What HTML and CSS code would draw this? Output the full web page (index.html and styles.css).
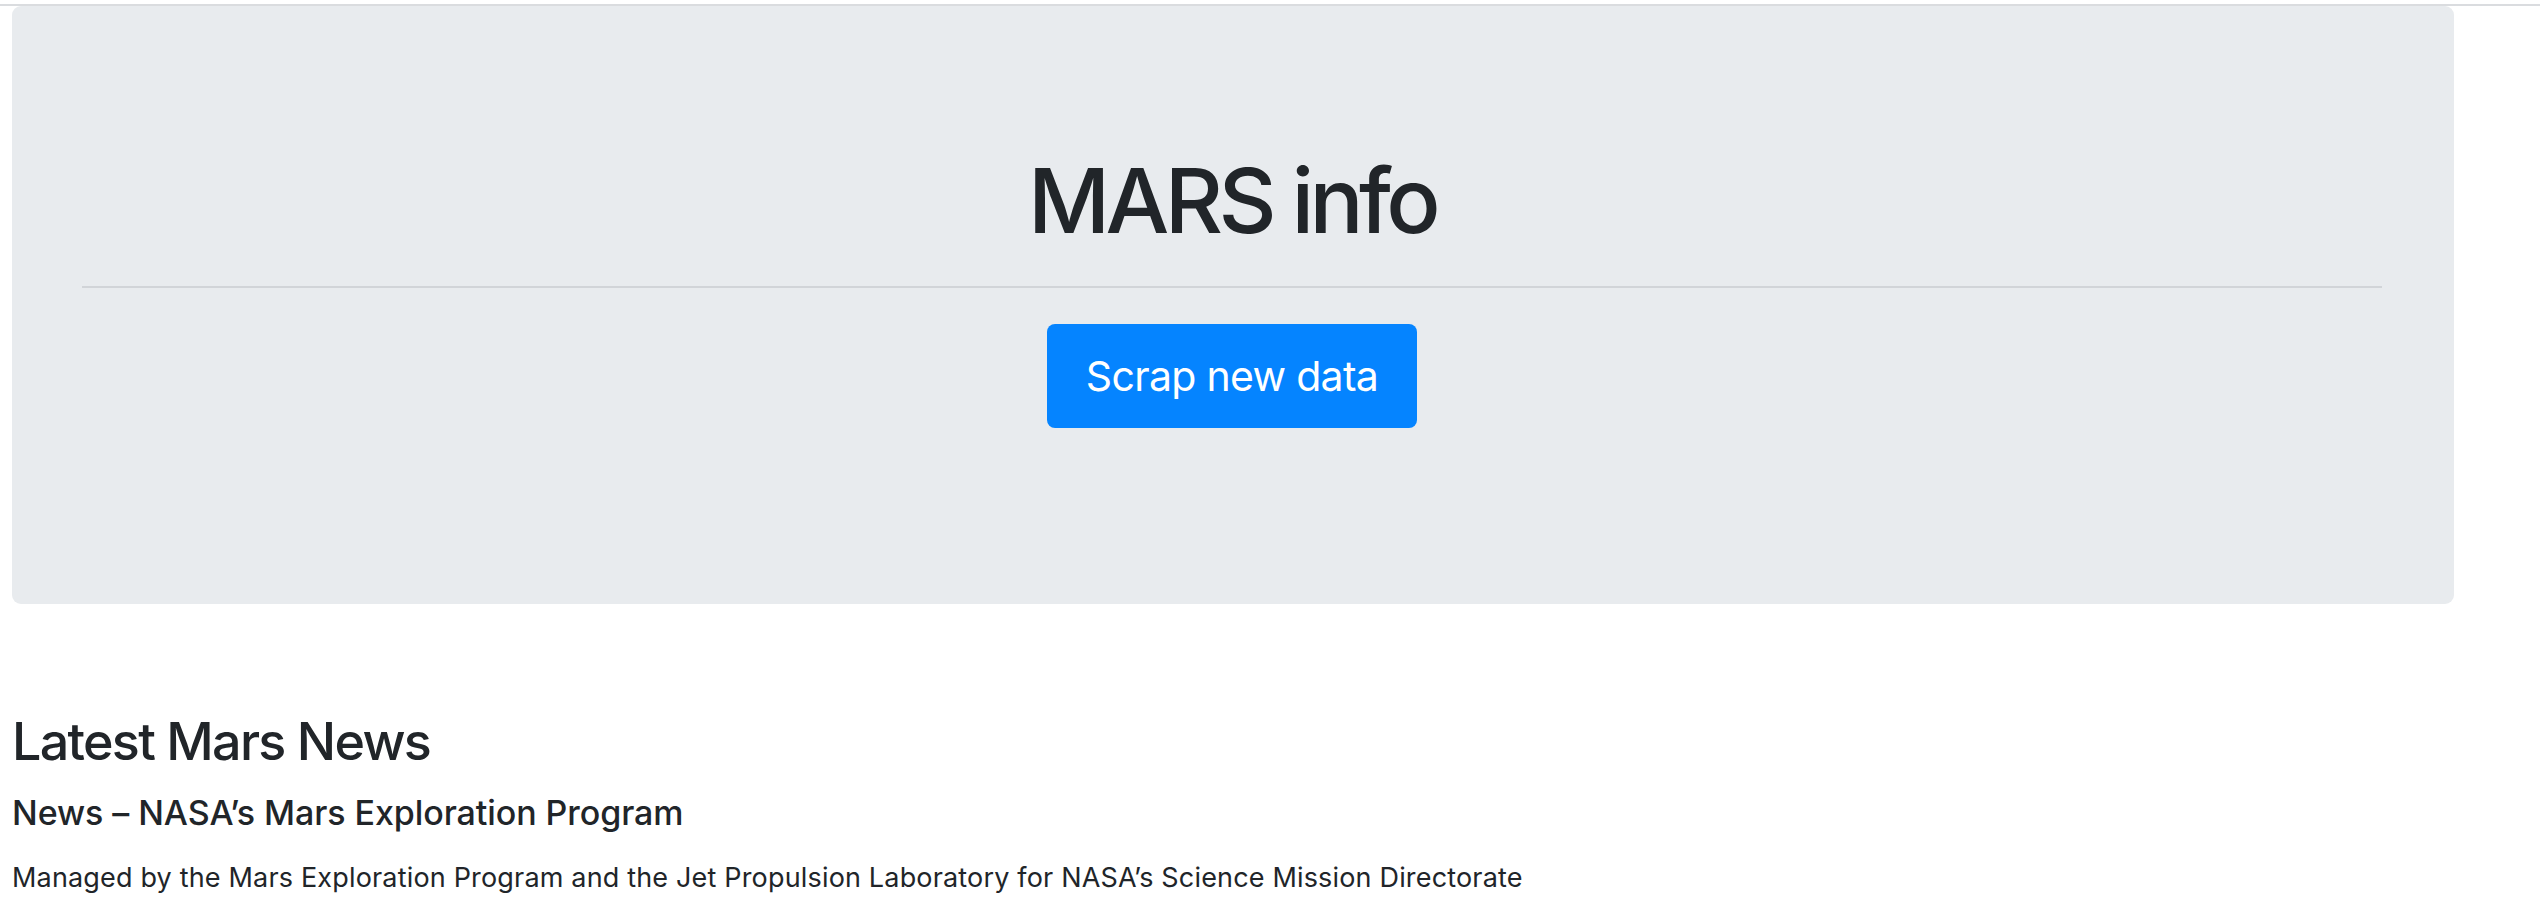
FILE: index.html
```html
<!DOCTYPE html>
<html lang="en">
<head>
<meta charset="utf-8">
<title>MARS info</title>
<link rel="stylesheet" href="styles.css">
</head>
<body>
<div class="topline"></div>
<div class="jumbotron">
  <h1 class="display">MARS info</h1>
  <hr class="divider">
  <a class="btn-primary" href="#">Scrap new data</a>
</div>
<div class="news">
  <h2 class="news-heading">Latest Mars News</h2>
  <h4 class="news-title">News – NASA’s Mars Exploration Program</h4>
  <p class="news-body">Managed by the Mars Exploration Program and the Jet Propulsion Laboratory for NASA’s Science Mission Directorate</p>
</div>
</body>
</html>
```
FILE: styles.css
```css
html, body {
  margin: 0;
  padding: 0;
  background: #ffffff;
}
body {
  font-family: Inter, "Noto Sans", "Liberation Sans", sans-serif;
  color: #212529;
}
.topline {
  height: 2px;
  margin-top: 4px;
  background: #dadcdf;
}
.jumbotron {
  box-sizing: border-box;
  margin: 0 86px 0 12px;
  height: 598px;
  padding: 141px 72px 0 70px;
  background: #e8ebee;
  border-radius: 9px;
  text-align: center;
}
.display {
  margin: 0;
  font-size: 90px;
  line-height: 108px;
  font-weight: 500;
  letter-spacing: -4.6px;
}
.divider {
  margin: 31px 0 0;
  border: 0;
  height: 2px;
  background: #d1d4d8;
}
.btn-primary {
  display: inline-block;
  margin-top: 36px;
  padding: 21px 39px;
  font-size: 41px;
  line-height: 62px;
  letter-spacing: -0.7px;
  color: #ffffff;
  background: #0584ff;
  border-radius: 8px;
  text-decoration: none;
}
.news {
  padding: 107px 12px 0;
}
.news-heading {
  margin: 0;
  font-size: 52px;
  line-height: 62px;
  font-weight: 500;
  letter-spacing: -1.7px;
}
.news-title {
  margin: 19px 0 0;
  font-size: 34px;
  line-height: 41px;
  font-weight: 500;
  letter-spacing: -0.08px;
}
.news-body {
  margin: 25px 0 0;
  font-size: 27px;
  line-height: 40px;
  font-weight: 400;
  letter-spacing: 0.17px;
}
```
